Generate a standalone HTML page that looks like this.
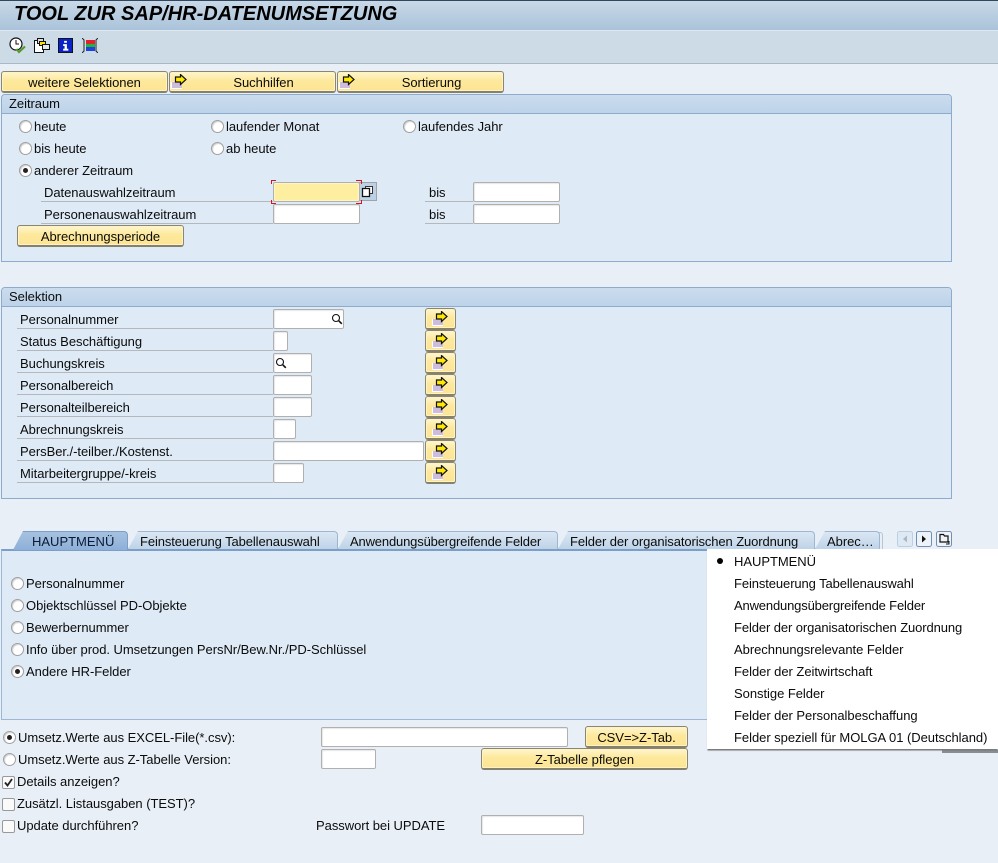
<!DOCTYPE html>
<html lang="de"><head><meta charset="utf-8"><title>Tool</title>
<style>
html,body{margin:0;padding:0}
body{width:998px;height:863px;position:relative;overflow:hidden;background:#e8eff7;font:13px/16px "Liberation Sans",Arial,sans-serif;color:#0b0b0b;letter-spacing:-.04px}
div,span,svg{position:absolute;box-sizing:border-box}
.t{white-space:nowrap;height:16px}
.btn{height:22px;border:1px solid #8a8672;border-bottom:2px solid #85816f;border-radius:3px;background:linear-gradient(#fff6cf,#fde99c 45%,#fde493);text-align:center;line-height:22px;white-space:nowrap;box-shadow:inset 0 0 0 1px #fff3c4}
.in{height:20px;background:#fff;border:1px solid #b0b0b0;border-radius:2px;box-shadow:inset 1px 1px 1px #e6e6e6}
.grp{left:1px;width:951px;border:1px solid #8eabcd;border-radius:4px 4px 0 0;background:#deeaf5}
.hd{left:0;top:0;right:0;height:19px;background:linear-gradient(#cbdcee,#bdd3e9);border-bottom:1px solid #8eabc9;border-radius:3px 3px 0 0}
.ln{height:1px;background:#b4b8bc}
.r{width:13px;height:13px;border:1px solid #a0a0a0;border-radius:50%;background:#fff;box-shadow:inset 1px 1px 1px #cfcfcf}
.r.c:after{content:"";position:absolute;left:3px;top:3px;width:5px;height:5px;border-radius:50%;background:#222}
.cb{width:13px;height:13px;border:1px solid #999;border-radius:2px;background:#fafafa}
.tab{top:531px;height:18px;background:linear-gradient(#dbe7f3,#bed3e8);border:1px solid #9db7d3;border-bottom:0;border-radius:3px 4px 0 0;line-height:20px;white-space:nowrap;padding-left:11px;clip-path:polygon(10px 0,100% 0,100% 100%,0 100%)}
.ab{width:31px;height:22px;left:425px;padding:0}
.m{left:734px;white-space:nowrap;height:16px}
</style></head><body>
<svg width="0" height="0" style="left:0;top:0"><defs>
<symbol id="ar" viewBox="0 0 16 15"><rect x="0" y="8" width="11" height="7" fill="#cdbcdc"/><path d="M0 15h11v-1H1V8H0z" fill="#fff"/><path d="M4.500 3h5V.5L15 5.500l-5.500 5V8h-5z" fill="#ffe800" stroke="#111" stroke-width="1.200"/></symbol>
<symbol id="mg" viewBox="0 0 12 12"><circle cx="5" cy="5" r="3.500" fill="#fff" stroke="#111" stroke-width="1.100"/><path d="M7.800 7.800l3 3" stroke="#111" stroke-width="1.600"/></symbol>
</defs></svg>

<!-- title -->
<div style="left:0;top:0;width:998px;height:31px;background:linear-gradient(#c8d8e7,#abc3da);border-top:1px solid #34465e;border-bottom:1px solid #dfe8f1"></div>
<div style="left:14px;top:2px;height:24px;font:italic bold 20px/24px 'Liberation Sans',Arial,sans-serif;letter-spacing:0;color:#000;white-space:nowrap">TOOL ZUR SAP/HR-DATENUMSETZUNG</div>

<!-- toolbar -->
<div style="left:0;top:31px;width:998px;height:33px;background:#cddbe7;border-bottom:1px solid #a9b8c6"></div>
<svg style="left:9px;top:37px" width="18" height="18" viewBox="0 0 18 18"><circle cx="7" cy="7" r="6" fill="#fff" stroke="#111" stroke-width="1.200"/><path d="M7 3v4h3" fill="none" stroke="#111"/><path d="M7.500 12l2.500 3 6-5.500" fill="none" stroke="#4e9a24" stroke-width="2"/></svg>
<svg style="left:33px;top:37px" width="17" height="17" viewBox="0 0 17 17"><path d="M1.500 3.500h9v12h-9z" fill="#fff" stroke="#111"/><path d="M4.500 1.500h6v5h-6z" fill="#ddd" stroke="#111"/><path d="M6.500 4.500h6v4h-6z" fill="#ffe100" stroke="#111"/><path d="M9.500 7.500h7v5h-7z" fill="#e6e6e6" stroke="#111"/></svg>
<svg style="left:58px;top:38px" width="15" height="15" viewBox="0 0 16 16"><rect width="16" height="16" fill="#111"/><rect x="1" y="1" width="14" height="14" fill="#0a22c8"/><path d="M6.500 3h3v2h-3zM5.500 6.500h4v5h1.500v2H5.500v-2h1.500v-3h-1.500z" fill="#fff"/></svg>
<svg style="left:82px;top:38px" width="16" height="15" viewBox="0 0 16 15"><path d="M0 0l2 2v11l-2 2M16 0l-2 2v11l2 2" fill="none" stroke="#222"/><rect x="4" y="2" width="9" height="4" fill="#e0222a"/><rect x="4" y="6" width="9" height="3" fill="#21b33b"/><rect x="4" y="9" width="9" height="4" fill="#2040e0"/></svg>

<!-- top buttons -->
<div class="btn" style="left:1px;top:71px;width:167px">weitere Selektionen</div>
<div class="btn" style="left:169px;top:71px;width:167px;padding-left:22px">Suchhilfen</div>
<div class="btn" style="left:337px;top:71px;width:167px;padding-left:22px">Sortierung</div>
<svg style="left:171px;top:74px" width="16" height="15"><use href="#ar"/></svg>
<svg style="left:339px;top:74px" width="16" height="15"><use href="#ar"/></svg>

<!-- Zeitraum -->
<div class="grp" style="top:94px;height:168px"><div class="hd"></div></div>
<div class="t" style="left:9px;top:96px">Zeitraum</div>
<div class="r" style="left:19px;top:120px"></div><div class="t" style="left:34px;top:119px">heute</div>
<div class="r" style="left:211px;top:120px"></div><div class="t" style="left:226px;top:119px">laufender Monat</div>
<div class="r" style="left:403px;top:120px"></div><div class="t" style="left:418px;top:119px">laufendes Jahr</div>
<div class="r" style="left:19px;top:142px"></div><div class="t" style="left:34px;top:141px">bis heute</div>
<div class="r" style="left:211px;top:142px"></div><div class="t" style="left:226px;top:141px">ab heute</div>
<div class="r c" style="left:19px;top:164px"></div><div class="t" style="left:34px;top:163px">anderer Zeitraum</div>

<div class="t" style="left:44px;top:185px">Datenauswahlzeitraum</div><div class="ln" style="left:41px;top:201px;width:232px"></div>
<div class="t" style="left:44px;top:207px">Personenauswahlzeitraum</div><div class="ln" style="left:41px;top:223px;width:232px"></div>
<div style="left:359px;top:182px;width:18px;height:19px;background:#bcd0e6;border:1px solid #a3a3a3;border-left:0"></div>
<svg style="left:361px;top:185px" width="13" height="13" viewBox="0 0 13 13"><path d="M4.500 1.500h7v7h-7z" fill="#fff" stroke="#333"/><path d="M1.500 3.500h7v8h-7z" fill="#fff" stroke="#111" stroke-width="1.300"/></svg>
<div class="in" style="left:273px;top:182px;width:87px;background:#feeea0;box-shadow:inset 0 0 1px 1px #fff6c5"></div>
<svg style="left:271px;top:180px" width="92" height="26"><path d="M.5 4V.500H5M85 .500h5.500V4M.5 20v3.500H5M85 23.500h5.500V20" fill="none" stroke="#d8121e"/></svg>
<div class="in" style="left:273px;top:204px;width:87px"></div>
<div class="t" style="left:429px;top:185px">bis</div><div class="ln" style="left:425px;top:201px;width:48px"></div>
<div class="t" style="left:429px;top:207px">bis</div><div class="ln" style="left:425px;top:223px;width:48px"></div>
<div class="in" style="left:473px;top:182px;width:87px"></div>
<div class="in" style="left:473px;top:204px;width:87px"></div>
<div class="btn" style="left:17px;top:225px;width:167px">Abrechnungsperiode</div>

<!-- Selektion -->
<div class="grp" style="top:287px;height:212px"><div class="hd"></div></div>
<div class="t" style="left:9px;top:289px">Selektion</div>

<div class="t" style="left:20px;top:312px">Personalnummer</div><div class="ln" style="left:17px;top:328px;width:256px"></div>
<div class="t" style="left:20px;top:334px">Status Beschäftigung</div><div class="ln" style="left:17px;top:350px;width:256px"></div>
<div class="t" style="left:20px;top:356px">Buchungskreis</div><div class="ln" style="left:17px;top:372px;width:256px"></div>
<div class="t" style="left:20px;top:378px">Personalbereich</div><div class="ln" style="left:17px;top:394px;width:256px"></div>
<div class="t" style="left:20px;top:400px">Personalteilbereich</div><div class="ln" style="left:17px;top:416px;width:256px"></div>
<div class="t" style="left:20px;top:422px">Abrechnungskreis</div><div class="ln" style="left:17px;top:438px;width:256px"></div>
<div class="t" style="left:20px;top:444px">PersBer./-teilber./Kostenst.</div><div class="ln" style="left:17px;top:460px;width:256px"></div>
<div class="t" style="left:20px;top:466px">Mitarbeitergruppe/-kreis</div><div class="ln" style="left:17px;top:482px;width:256px"></div>

<div class="in" style="left:273px;top:309px;width:71px"></div><svg style="left:331px;top:313px" width="12" height="12"><use href="#mg"/></svg>
<div class="in" style="left:273px;top:331px;width:15px"></div>
<div class="in" style="left:273px;top:353px;width:39px"></div><svg style="left:275px;top:357px" width="12" height="12"><use href="#mg"/></svg>
<div class="in" style="left:273px;top:375px;width:39px"></div>
<div class="in" style="left:273px;top:397px;width:39px"></div>
<div class="in" style="left:273px;top:419px;width:23px"></div>
<div class="in" style="left:273px;top:441px;width:151px"></div>
<div class="in" style="left:273px;top:463px;width:31px"></div>

<div class="btn ab" style="top:308px"></div><svg style="left:432px;top:311px" width="16" height="15"><use href="#ar"/></svg>
<div class="btn ab" style="top:330px"></div><svg style="left:432px;top:333px" width="16" height="15"><use href="#ar"/></svg>
<div class="btn ab" style="top:352px"></div><svg style="left:432px;top:355px" width="16" height="15"><use href="#ar"/></svg>
<div class="btn ab" style="top:374px"></div><svg style="left:432px;top:377px" width="16" height="15"><use href="#ar"/></svg>
<div class="btn ab" style="top:396px"></div><svg style="left:432px;top:399px" width="16" height="15"><use href="#ar"/></svg>
<div class="btn ab" style="top:418px"></div><svg style="left:432px;top:421px" width="16" height="15"><use href="#ar"/></svg>
<div class="btn ab" style="top:440px"></div><svg style="left:432px;top:443px" width="16" height="15"><use href="#ar"/></svg>
<div class="btn ab" style="top:462px"></div><svg style="left:432px;top:465px" width="16" height="15"><use href="#ar"/></svg>

<!-- tabs -->
<div style="left:1px;top:549px;width:750px;height:171px;background:#deeaf5;border:1px solid #9db8d6;border-top:2px solid #7c9fc9"></div>
<div class="tab" style="left:128px;width:210px;letter-spacing:-.1px">Feinsteuerung Tabellenauswahl</div>
<div class="tab" style="left:338px;width:220px;letter-spacing:-.16px">Anwendungsübergreifende Felder</div>
<div class="tab" style="left:558px;width:257px;letter-spacing:-.1px">Felder der organisatorischen Zuordnung</div>
<div style="left:876px;top:532px;width:7px;height:17px;border:1px solid #b4c6da;border-left:0;border-bottom:0;border-radius:0 3px 0 0"></div>
<div class="tab" style="left:815px;width:65px">Abrec…</div>
<div class="tab" style="left:13px;width:115px;padding-left:18px;background:linear-gradient(#a7c2e0,#8db0d8);border-color:#7c9fc9;color:#0a1a36;height:19px;letter-spacing:0">HAUPTMENÜ</div>

<svg style="left:897px;top:531px" width="56" height="17" viewBox="0 0 56 17">
<rect x=".5" y=".5" width="15" height="15" rx="2" fill="#dfe9f3" stroke="#b9cfe5"/><path d="M10 4.500v7l-4-3.500z" fill="#aab8c6"/>
<rect x="19.500" y=".5" width="15" height="15" rx="2" fill="#edf3f9" stroke="#6f8fb5"/><path d="M25 4.500v7l4-3.500z" fill="#111"/>
<rect x="39.500" y=".5" width="15" height="15" rx="2" fill="#edf3f9" stroke="#6f8fb5"/><path d="M43 5v-1.500h3.500l1 1.500h3.500v6h-8z" fill="none" stroke="#111" stroke-width="1.200"/><path d="M49 13h3v-3" fill="none" stroke="#111"/>
</svg>

<div class="r" style="left:11px;top:577px"></div><div class="t" style="left:26px;top:576px">Personalnummer</div>
<div class="r" style="left:11px;top:599px"></div><div class="t" style="left:26px;top:598px">Objektschlüssel PD-Objekte</div>
<div class="r" style="left:11px;top:621px"></div><div class="t" style="left:26px;top:620px">Bewerbernummer</div>
<div class="r" style="left:11px;top:643px"></div><div class="t" style="left:26px;top:642px">Info über prod. Umsetzungen PersNr/Bew.Nr./PD-Schlüssel</div>
<div class="r c" style="left:11px;top:665px"></div><div class="t" style="left:26px;top:664px">Andere HR-Felder</div>

<!-- bottom form -->
<div class="r c" style="left:3px;top:731px"></div><div class="t" style="left:18px;top:730px">Umsetz.Werte aus EXCEL-File(*.csv):</div>
<div class="r" style="left:3px;top:753px"></div><div class="t" style="left:18px;top:752px">Umsetz.Werte aus Z-Tabelle Version:</div>
<div class="cb" style="left:2px;top:776px"></div><svg style="left:2px;top:776px" width="13" height="13" viewBox="0 0 13 13"><path d="M3 6.500l2.500 3L10 3" fill="none" stroke="#222" stroke-width="1.800"/></svg>
<div class="t" style="left:17px;top:774px">Details anzeigen?</div>
<div class="cb" style="left:2px;top:798px"></div><div class="t" style="left:17px;top:796px">Zusätzl. Listausgaben (TEST)?</div>
<div class="cb" style="left:2px;top:820px"></div><div class="t" style="left:17px;top:818px">Update durchführen?</div>
<div class="t" style="left:316px;top:818px">Passwort bei UPDATE</div>
<div class="in" style="left:321px;top:727px;width:247px"></div>
<div class="in" style="left:321px;top:749px;width:55px"></div>
<div class="in" style="left:481px;top:815px;width:103px"></div>
<div class="btn" style="left:585px;top:726px;width:103px">CSV=&gt;Z-Tab.</div>
<div class="btn" style="left:481px;top:748px;width:207px">Z-Tabelle pflegen</div>

<!-- popup -->
<div style="left:942px;top:750px;width:56px;height:3px;background:#8a8f94"></div>
<div style="left:707px;top:549px;width:291px;height:200px;background:#fff;box-shadow:0 2px 1px -0.500px #777"></div>
<div style="left:717px;top:558px;width:6px;height:6px;border-radius:50%;background:#000"></div>
<div class="m" style="top:554px">HAUPTMENÜ</div>
<div class="m" style="top:576px;letter-spacing:-.1px">Feinsteuerung Tabellenauswahl</div>
<div class="m" style="top:598px;letter-spacing:-.16px">Anwendungsübergreifende Felder</div>
<div class="m" style="top:620px;letter-spacing:-.1px">Felder der organisatorischen Zuordnung</div>
<div class="m" style="top:642px">Abrechnungsrelevante Felder</div>
<div class="m" style="top:664px">Felder der Zeitwirtschaft</div>
<div class="m" style="top:686px">Sonstige Felder</div>
<div class="m" style="top:708px">Felder der Personalbeschaffung</div>
<div class="m" style="top:730px">Felder speziell für MOLGA 01 (Deutschland)</div>
</body></html>
